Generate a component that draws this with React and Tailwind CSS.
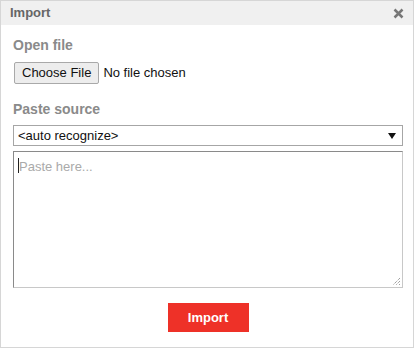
import React from "react";

export default function App() {
  return (
    <div className="w-[415px] h-[349px] bg-white" style={{ fontFamily: '"Liberation Sans", Arial, sans-serif' }}>
      <div className="w-[414px] h-[348px] border border-[#d6d6d6] flex flex-col">
        <div className="h-[24px] bg-[#f0f0f0] flex items-center justify-between pl-[9px] pr-[9px]">
          <span className="text-[13px] font-bold text-[#666]">Import</span>
          <svg width="11" height="11" viewBox="0 0 11 11" className="mt-[1px]">
            <path d="M1.5 1.5 L9.5 9.5 M9.5 1.5 L1.5 9.5" stroke="#777" strokeWidth="2.5" />
          </svg>
        </div>
        <div className="flex flex-col pl-[12px] pr-[10px]">
          <div className="mt-[12px] text-[14px] font-bold text-[#8a8a8a] leading-[16px]">Open file</div>
          <div className="mt-[9px] flex items-center">
            <div className="ml-[1px] h-[22px] px-[7px] flex items-center border border-[#a9a9a9] rounded-[2px] bg-[#ededed] text-[13px] text-[#111]">
              Choose File
            </div>
            <span className="ml-[4px] text-[13px] text-[#111]">No file chosen</span>
          </div>
          <div className="mt-[17px] text-[14px] font-bold text-[#8a8a8a] leading-[16px]">Paste source</div>
          <div className="mt-[8px] h-[21px] border border-[#a6a6a6] flex items-center justify-between pl-[4px] pr-[6px] text-[13px] text-[#111]">
            <span>&lt;auto recognize&gt;</span>
            <svg width="8" height="6" viewBox="0 0 8 6"><path d="M0 0 L8 0 L4 6 Z" fill="#111" /></svg>
          </div>
          <div className="relative mt-[5px] h-[137px] border border-[#c8c8c8] border-t-[#8a8a8a] border-l-[#8a8a8a]">
            <div className="absolute left-[4px] top-[6px] w-px h-[15px] bg-[#222]" />
            <div className="pl-[5px] pt-[5px] text-[13px] text-[#aaa]">Paste here...</div>
            <svg className="absolute right-[1px] bottom-[1px]" width="9" height="9" viewBox="0 0 9 9">
              <path d="M8 1 L1 8 M8 4 L4 8 M8 7 L7 8" stroke="#777" strokeWidth="1" strokeDasharray="1 1" />
            </svg>
          </div>
          <div className="mt-[15px] flex justify-center">
            <div className="w-[81px] h-[29px] bg-[#ee3128] flex items-center justify-center text-white text-[13px] font-bold">
              Import
            </div>
          </div>
        </div>
      </div>
    </div>
  );
}
